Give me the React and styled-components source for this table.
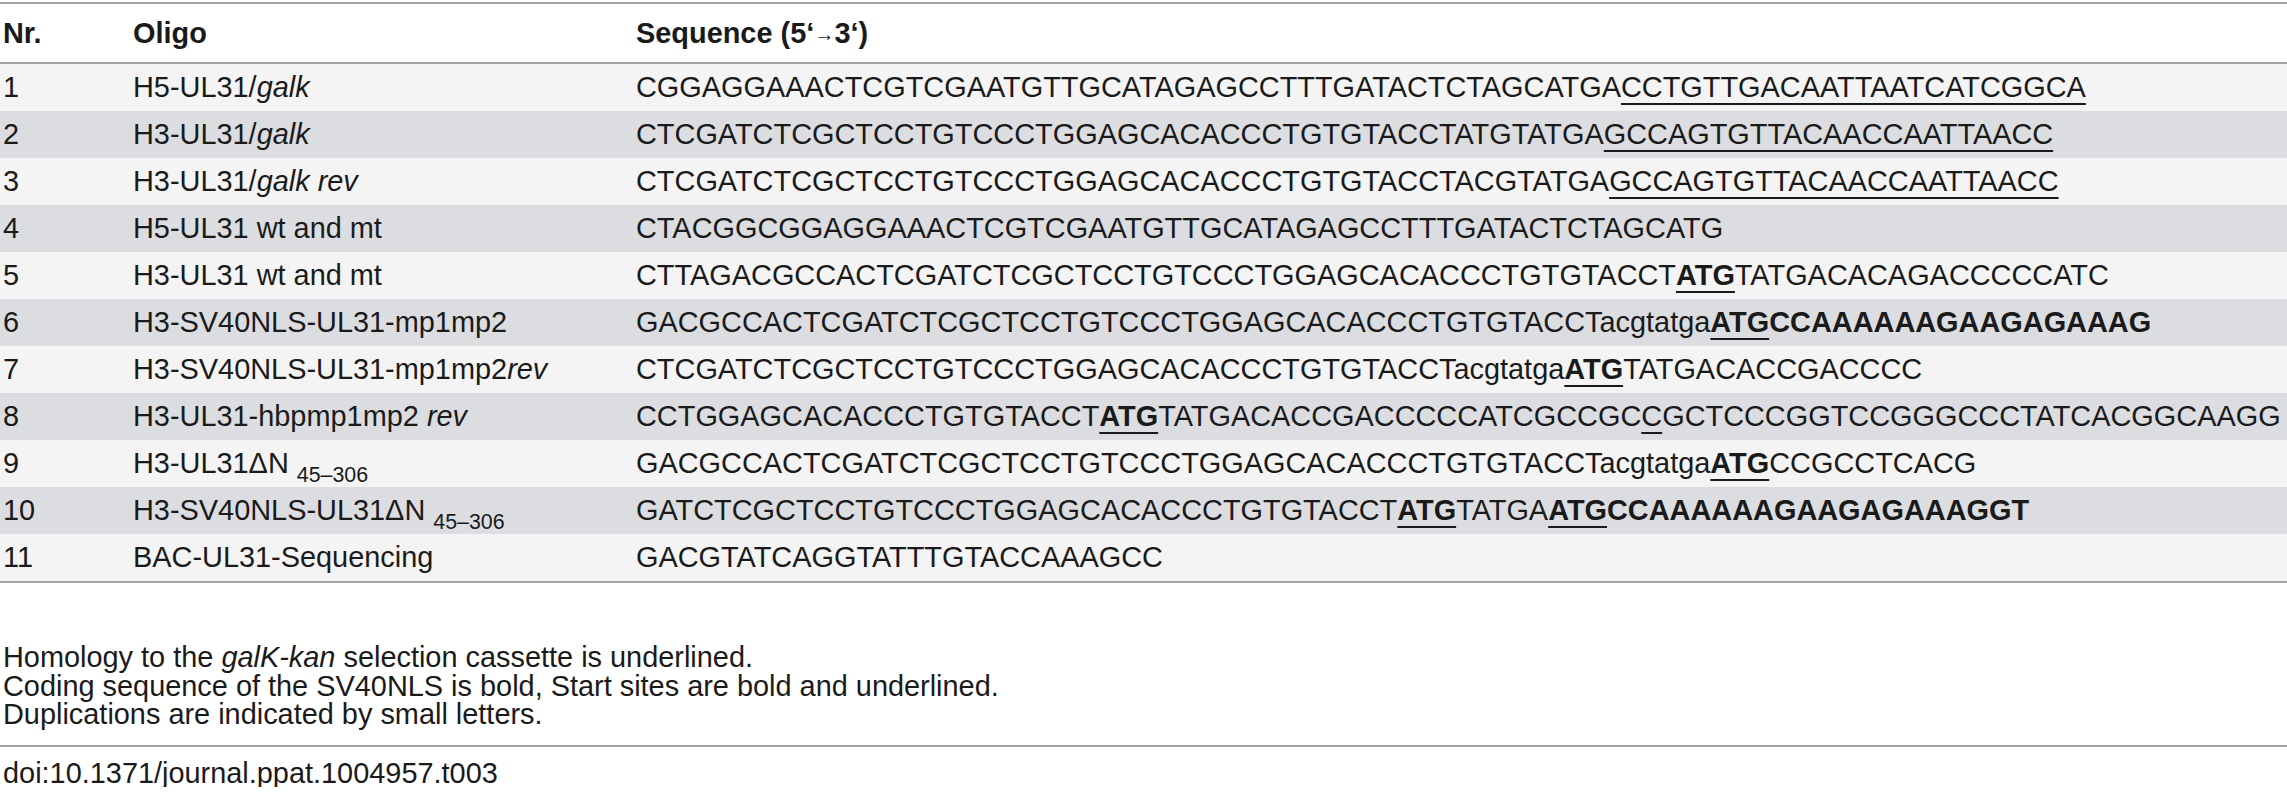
import React from 'react';
import styled, { createGlobalStyle } from 'styled-components';

const GlobalStyle = createGlobalStyle`
  html, body {
    margin: 0;
    padding: 0;
    background: #ffffff;
  }
  body {
    font-family: "Liberation Sans", Arial, Helvetica, sans-serif;
    color: #1a1a1a;
  }
`;

const Page = styled.div`
  width: 2287px;
  padding-top: 2px;
  font-size: 28.9px;
`;

const Table = styled.div`
  border-top: 2px solid #a3a3a3;
  border-bottom: 2px solid #a3a3a3;
`;

const Row = styled.div`
  display: grid;
  grid-template-columns: 130px 503px 1fr;
  align-items: center;
  padding-left: 3px;
  height: ${p => (p.$head ? '58px' : '47px')};
  background: ${p => (p.$head ? '#ffffff' : p.$shade ? '#dcdde0' : '#f4f4f4')};
  border-bottom: ${p => (p.$head ? '2px solid #a3a3a3' : 'none')};
  font-weight: ${p => (p.$head ? 'bold' : 'normal')};
  white-space: nowrap;
`;

const Cell = styled.div`
  line-height: 1;
`;

const U = styled.span`
  text-decoration: underline;
  text-decoration-thickness: 2px;
  text-underline-offset: 6px;
`;

const B = styled.b`
  font-weight: bold;
`;

const Start = styled(U)`
  font-weight: bold;
`;

const Sub = styled.sub`
  font-size: 0.74em;
  vertical-align: -0.4em;
  line-height: 0;
`;

const Arrow = styled.span`
  font-size: 0.7em;
  font-weight: normal;
  vertical-align: 0.12em;
`;

const Notes = styled.div`
  padding: 60px 0 16px 3px;
  line-height: 28.5px;
  border-bottom: 2px solid #a3a3a3;
`;

const Note = styled.div``;

const Doi = styled.div`
  padding: 12px 0 0 3px;
  line-height: 28.5px;
`;

const rows = [
  ['1', <>H5-UL31/<i>galk</i></>, <>CGGAGGAAACTCGTCGAATGTTGCATAGAGCCTTTGATACTCTAGCATGA<U>CCTGTTGACAATTAATCATCGGCA</U></>],
  ['2', <>H3-UL31/<i>galk</i></>, <>CTCGATCTCGCTCCTGTCCCTGGAGCACACCCTGTGTACCTATGTATGA<U>GCCAGTGTTACAACCAATTAACC</U></>],
  ['3', <>H3-UL31/<i>galk rev</i></>, <>CTCGATCTCGCTCCTGTCCCTGGAGCACACCCTGTGTACCTACGTATGA<U>GCCAGTGTTACAACCAATTAACC</U></>],
  ['4', 'H5-UL31 wt and mt', 'CTACGGCGGAGGAAACTCGTCGAATGTTGCATAGAGCCTTTGATACTCTAGCATG'],
  ['5', 'H3-UL31 wt and mt', <>CTTAGACGCCACTCGATCTCGCTCCTGTCCCTGGAGCACACCCTGTGTACCT<Start>ATG</Start>TATGACACAGACCCCCATC</>],
  ['6', 'H3-SV40NLS-UL31-mp1mp2', <>GACGCCACTCGATCTCGCTCCTGTCCCTGGAGCACACCCTGTGTACCTacgtatga<Start>ATG</Start><B>CCAAAAAAGAAGAGAAAG</B></>],
  ['7', <>H3-SV40NLS-UL31-mp1mp2<i>rev</i></>, <>CTCGATCTCGCTCCTGTCCCTGGAGCACACCCTGTGTACCTacgtatga<Start>ATG</Start>TATGACACCGACCCC</>],
  ['8', <>H3-UL31-hbpmp1mp2 <i>rev</i></>, <>CCTGGAGCACACCCTGTGTACCT<Start>ATG</Start>TATGACACCGACCCCCATCGCCGC<U>C</U>GCTCCCGGTCCGGGCCCTATCACGGCAAGG</>],
  ['9', <>H3-UL31ΔN <Sub>45–306</Sub></>, <>GACGCCACTCGATCTCGCTCCTGTCCCTGGAGCACACCCTGTGTACCTacgtatga<Start>ATG</Start>CCGCCTCACG</>],
  ['10', <>H3-SV40NLS-UL31ΔN <Sub>45–306</Sub></>, <>GATCTCGCTCCTGTCCCTGGAGCACACCCTGTGTACCT<Start>ATG</Start>TATGA<Start>ATG</Start><B>CCAAAAAAGAAGAGAAAGGT</B></>],
  ['11', 'BAC-UL31-Sequencing', 'GACGTATCAGGTATTTGTACCAAAGCC'],
];

export default function App() {
  return (
    <Page>
      <GlobalStyle />
      <Table>
        <Row $head>
          <Cell>Nr.</Cell>
          <Cell>Oligo</Cell>
          <Cell>Sequence (5‘<Arrow>→</Arrow>3‘)</Cell>
        </Row>
        {rows.map(([nr, oligo, seq], i) => (
          <Row key={nr} $shade={i % 2 === 1}>
            <Cell>{nr}</Cell>
            <Cell>{oligo}</Cell>
            <Cell>{seq}</Cell>
          </Row>
        ))}
      </Table>
      <Notes>
        <Note>Homology to the <i>galK-kan</i> selection cassette is underlined.</Note>
        <Note>Coding sequence of the SV40NLS is bold, Start sites are bold and underlined.</Note>
        <Note>Duplications are indicated by small letters.</Note>
      </Notes>
      <Doi>doi:10.1371/journal.ppat.1004957.t003</Doi>
    </Page>
  );
}
